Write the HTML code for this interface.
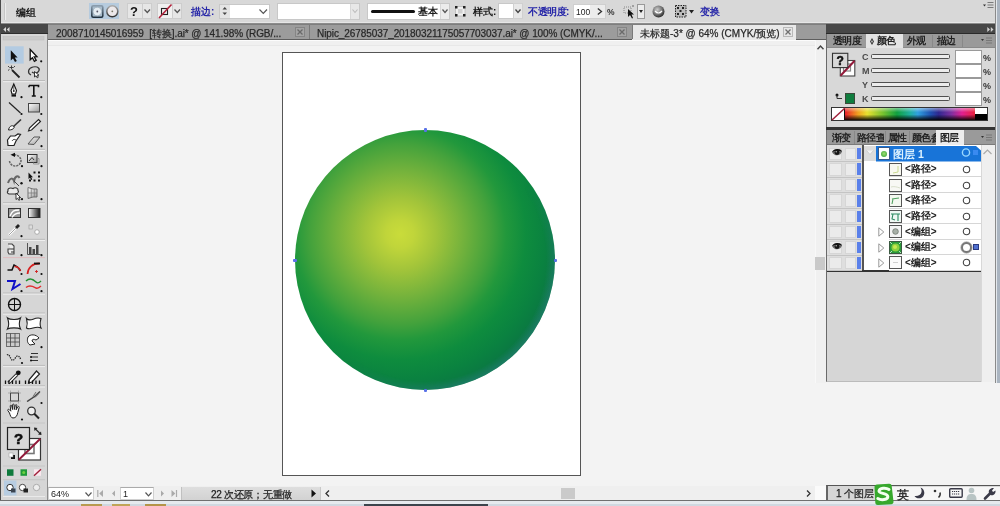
<!DOCTYPE html>
<html><head><meta charset="utf-8">
<style>
*{margin:0;padding:0;box-sizing:border-box}
html,body{width:1000px;height:506px;overflow:hidden;background:#f3f3f3;font-family:"Liberation Sans",sans-serif;position:relative}
.a{position:absolute}
.t{position:absolute;white-space:nowrap;line-height:1;will-change:transform}
.box{position:absolute;background:#fff;border:1px solid #c4c4c4}
.dd{position:absolute;background:#ececec;border:1px solid #c4c4c4}
.blue{color:#2626a8;font-weight:700}
.pt{font-size:10px;letter-spacing:-0.6px;font-weight:700;color:#222}
.cj{font-size:10px;font-weight:700;color:#1a1a1a}
svg{position:absolute;overflow:visible;will-change:transform}
</style></head><body>
<!-- ============ control bar ============ -->
<div class="a" style="left:0;top:0;width:1000px;height:24px;background:#d8d8d8"></div>
<div class="a" style="left:0;top:21.5px;width:1000px;height:1.5px;background:#e6e6e6"></div><div class="a" style="left:0;top:23px;width:1000px;height:1px;background:#8c8c8c"></div>
<div class="a" style="left:4px;top:3px;width:2px;height:17px;background:#c6c6c6;border-right:1px solid #ececec"></div>
<div class="t cj" style="left:16px;top:8px">编组</div>
<!-- isolate buttons -->
<div class="a" style="left:89px;top:3px;width:30px;height:16px;background:#b6cbde"></div>
<svg style="left:90.5px;top:5px" width="14" height="14"><defs><linearGradient id="isf" x1="0" y1="0" x2="0" y2="1"><stop offset="0" stop-color="#8a9cac"/><stop offset="1" stop-color="#1e2e3c"/></linearGradient></defs><rect x="0.8" y="0.8" width="11" height="11.5" rx="1.5" fill="#a8bccc" stroke="url(#isf)" stroke-width="1.6"/><circle cx="6.3" cy="6.5" r="4.3" fill="#e4ecf2" stroke="#9aaab8" stroke-width="0.7"/><circle cx="6.3" cy="6.5" r="0.9" fill="#556"/></svg>
<svg style="left:105.5px;top:5px" width="14" height="14"><defs><linearGradient id="isg" x1="0" y1="0" x2="0" y2="1"><stop offset="0" stop-color="#aaa"/><stop offset="1" stop-color="#333"/></linearGradient></defs><circle cx="6.3" cy="6.3" r="5.5" fill="#ece8ea" stroke="url(#isg)" stroke-width="1.5"/><circle cx="6.3" cy="6.3" r="0.9" fill="#776"/></svg>
<!-- fill ? -->
<div class="a" style="left:127px;top:3px;width:16px;height:16px;background:#e6e6e6;border:1px solid #cdcdcd"></div>
<div class="t" style="left:130px;top:5px;font-size:13px;font-weight:bold;color:#111">?</div>
<div class="a" style="left:142px;top:3px;width:10px;height:16px;background:#e6e6e6;border:1px solid #cdcdcd"></div>
<svg style="left:144px;top:9px" width="7" height="5"><path d="M0.5 0.5 L3.3 3.5 L6 0.5" fill="none" stroke="#555" stroke-width="1.3"/></svg>
<!-- stroke none -->
<div class="a" style="left:157px;top:3px;width:16px;height:16px;background:#f0f0f0;border:1px solid #cdcdcd"></div>
<svg style="left:157px;top:3px" width="16" height="16"><rect x="4.5" y="5.5" width="6" height="6" fill="none" stroke="#222" stroke-width="1.1"/><path d="M2 15 L14.5 1.5" stroke="#b0203a" stroke-width="1.6"/></svg>
<div class="a" style="left:172px;top:3px;width:10px;height:16px;background:#e6e6e6;border:1px solid #cdcdcd"></div>
<svg style="left:174px;top:9px" width="7" height="5"><path d="M0.5 0.5 L3.3 3.5 L6 0.5" fill="none" stroke="#555" stroke-width="1.3"/></svg>
<div class="t blue" style="left:191px;top:7px;font-size:10px">描边:</div>
<!-- stroke weight -->
<div class="box" style="left:219px;top:4px;width:51px;height:15px;border-color:#c8c8c8"></div>
<div class="a" style="left:220px;top:5px;width:10px;height:13px;background:#e4e4e4"></div>
<svg style="left:222px;top:6px" width="6" height="10"><path d="M0.5 3.5 L2.8 1 L5 3.5 Z M0.5 6.5 L2.8 9 L5 6.5 Z" fill="#444"/></svg>
<svg style="left:259px;top:9px" width="9" height="6"><path d="M0.5 0.5 L4.3 4.3 L8 0.5" fill="none" stroke="#555" stroke-width="1.2"/></svg>
<!-- variable width -->
<div class="box" style="left:277px;top:3px;width:83px;height:17px;border-color:#c8c8c8"></div>
<div class="a" style="left:350px;top:4px;width:9px;height:15px;background:#e8e8e8;border-left:1px solid #d8d8d8"></div>
<svg style="left:352px;top:9px" width="6" height="5"><path d="M0.5 0.5 L3 3.5 L5.5 0.5" fill="none" stroke="#bbb" stroke-width="1.1"/></svg>
<!-- brush -->
<div class="box" style="left:367px;top:3px;width:83px;height:17px;border-color:#c8c8c8"></div>
<div class="a" style="left:371px;top:10px;width:44px;height:3px;background:#111;border-radius:2px"></div>
<div class="t cj" style="left:418px;top:7px">基本</div>
<div class="a" style="left:440px;top:4px;width:9px;height:15px;background:#ececec;border-left:1px solid #d8d8d8"></div>
<svg style="left:442px;top:9px" width="6" height="5"><path d="M0.5 0.5 L3 3.5 L5.5 0.5" fill="none" stroke="#555" stroke-width="1.2"/></svg>
<svg style="left:455px;top:6px" width="11" height="11"><rect x="0.5" y="0.5" width="9.5" height="9.5" fill="#f0f0f0" stroke="#bbb" stroke-width="0.8"/><rect x="3" y="3" width="4.5" height="4.5" fill="#d0d0d0"/><path d="M0 0h2.5v2.5h-2.5z M8 0h2.5v2.5h-2.5z M0 8h2.5v2.5h-2.5z M8 8h2.5v2.5h-2.5z" fill="#222"/></svg>
<div class="t cj" style="left:473px;top:7px">样式:</div>
<div class="box" style="left:498px;top:3px;width:16px;height:16px;border-color:#c8c8c8"></div>
<div class="a" style="left:513px;top:3px;width:10px;height:16px;background:#e8e8e8;border:1px solid #d0d0d0"></div>
<svg style="left:515px;top:9px" width="6" height="5"><path d="M0.5 0.5 L3 3.5 L5.5 0.5" fill="none" stroke="#444" stroke-width="1.3"/></svg>
<div class="t blue" style="left:528px;top:7px;font-size:10px;letter-spacing:-0.5px">不透明度:</div>
<div class="box" style="left:573px;top:4px;width:33px;height:15px;border-color:#cfcfcf"></div>
<div class="a" style="left:590px;top:5px;width:15px;height:13px;background:#ececec"></div><div class="t" style="left:575.5px;top:7.5px;font-size:8.5px;color:#222">100</div>
<svg style="left:597px;top:8px" width="6" height="7"><path d="M0.8 0.5 L4.5 3.5 L0.8 6.5" fill="none" stroke="#333" stroke-width="1.3"/></svg>
<div class="t" style="left:607px;top:7.5px;font-size:8.5px;font-weight:700;color:#333">%</div>
<svg style="left:623px;top:4px" width="14" height="15"><rect x="1" y="3" width="7" height="6" fill="none" stroke="#777" stroke-width="0.8" stroke-dasharray="1 1"/><path d="M5 5 L5 13 L7 11 L9 14.5 L10 14 L8.5 10.5 L11 10.5 Z" fill="#111"/><path d="M9 1 l2 2 M11 1 l-2 2" stroke="#888" stroke-width="0.7"/></svg>
<div class="a" style="left:637px;top:4px;width:8px;height:15px;background:#ececec;border:1px solid #999"></div>
<svg style="left:639px;top:10px" width="4" height="3"><path d="M0 0 L4 0 L2 3 Z" fill="#222"/></svg>
<svg style="left:652px;top:5px" width="13" height="13"><defs><radialGradient id="gl" cx="40%" cy="35%" r="70%"><stop offset="0" stop-color="#ccc"/><stop offset="0.55" stop-color="#777"/><stop offset="1" stop-color="#222"/></radialGradient></defs><circle cx="6.5" cy="6.5" r="6" fill="url(#gl)"/><path d="M3 6 Q6.5 10 10 6" stroke="#fff" stroke-width="1.2" fill="none"/></svg>
<svg style="left:675px;top:5px" width="12" height="13"><rect x="0.5" y="0.5" width="10.5" height="11.5" fill="#bbb" stroke="#222" stroke-width="1" stroke-dasharray="1.5 1"/><path d="M2 2 h2 v2 h-2z M7 2 h2 v2 h-2z M2 8 h2 v2 h-2z M7 8 h2 v2 h-2z M4.5 5 h2 v2 h-2z" fill="#222"/></svg>
<svg style="left:689px;top:10px" width="5" height="4"><path d="M0 0 L5 0 L2.5 3.5 Z" fill="#222"/></svg>
<div class="t blue" style="left:700px;top:7px;font-size:10px">变换</div>
<svg style="left:983px;top:1px" width="12" height="9"><path d="M0 3.5 L3 3.5 L1.5 5.5 Z" fill="#333"/><path d="M4.5 1.5 h6 M4.5 4 h6 M4.5 6.5 h6" stroke="#7a7a7a" stroke-width="1.1"/></svg>

<!-- ============ tool panel ============ -->
<div class="a" style="left:0;top:0;width:1px;height:500px;background:#4a4a4a"></div>
<div class="a" style="left:1px;top:24px;width:47px;height:10px;background:#474747;border-bottom:1px solid #2c2c2c"></div>
<svg style="left:3px;top:26.5px" width="7" height="5"><path d="M3 0 L0.3 2.5 L3 5 Z M6.5 0 L3.8 2.5 L6.5 5 Z" fill="#d8d8d8"/></svg>
<div class="a" id="tp" style="left:1px;top:34px;width:47px;height:466px;background:#d6d6d6;border-right:1px solid #8c8c8c"></div>
<svg style="left:0;top:0" width="48" height="506" viewBox="0 0 48 506">
<defs>
<linearGradient id="rg" x1="0" y1="0" x2="1" y2="1"><stop offset="0" stop-color="#fff"/><stop offset="1" stop-color="#999"/></linearGradient>
<linearGradient id="gg" x1="0" y1="0" x2="1" y2="0"><stop offset="0" stop-color="#fff"/><stop offset="1" stop-color="#111"/></linearGradient>
</defs>
<!-- grip -->
<rect x="3" y="36.5" width="41" height="3.5" fill="#c9c9c9" stroke="#bdbdbd" stroke-width="0.5"/>
<!-- selection highlight -->
<rect x="5" y="46.3" width="18.7" height="17.3" fill="#b3cbe2"/>
<!-- arrow -->
<path d="M10.8 50.2 L10.8 60.5 L13 58.4 L15 62 L16.8 61 L14.8 57.6 L17.6 57.4 Z" fill="#111"/>
<!-- direct selection -->
<path d="M30.2 49.5 L30.2 59.8 L32.4 57.7 L34.4 61.3 L36.2 60.3 L34.2 56.9 L37 56.7 Z" fill="#fff" stroke="#111" stroke-width="1.3"/>
<circle cx="41.2" cy="61.3" r="1.1" fill="#111"/>
<!-- magic wand -->
<path d="M12 70 L19.5 77.5" stroke="#222" stroke-width="1.8"/>
<path d="M11.5 65.5 v4 M9.5 67.5 h4 M8 66 l1.3 1.3 M15 66 l-1.3 1.3 M8 70.5 l1.5 -1.2" stroke="#333" stroke-width="0.9"/>
<!-- lasso -->
<path d="M31 75 C27 73 28 68 33 67 C38 66 41 69 38 72 C36 74 33 73 32 72" fill="none" stroke="#333" stroke-width="1.2"/>
<path d="M34.5 71.5 L34.5 77 L36 75.8 L37.2 77.8 L38.3 77.2 L37.2 75.3 L39 75.2 Z" fill="#fff" stroke="#222" stroke-width="0.9"/>
<line x1="3" y1="80.5" x2="45" y2="80.5" stroke="#bcbcbc" stroke-width="1"/><line x1="3" y1="81.7" x2="45" y2="81.7" stroke="#eeeeee" stroke-width="1"/>
<!-- pen -->
<path d="M13.8 84 L16.5 90.5 L15.5 94 L12 94 L11 90.5 Z" fill="#fff" stroke="#111" stroke-width="1.1"/>
<path d="M13.8 86 v4.5" stroke="#333" stroke-width="0.8"/><circle cx="13.8" cy="91" r="0.9" fill="#222"/>
<path d="M11.5 95.5 h4.5" stroke="#111" stroke-width="2.2"/>
<circle cx="21.5" cy="97.2" r="1.1" fill="#111"/>
<!-- type -->
<path d="M29 85.5 h9.5 v1.8 M29 85.5 v1.8 M33.8 85.5 v10.5 M31.8 96 h4" fill="none" stroke="#111" stroke-width="1.6"/>
<circle cx="41.3" cy="97.2" r="1.1" fill="#111"/>
<!-- line -->
<path d="M9 102.5 L20.5 113" stroke="#222" stroke-width="1.2"/>
<circle cx="21.5" cy="114" r="1.1" fill="#111"/>
<!-- rect -->
<rect x="28.5" y="103.5" width="11" height="8.5" fill="url(#rg)" stroke="#444" stroke-width="1"/>
<circle cx="41.3" cy="114" r="1.1" fill="#111"/>
<!-- brush -->
<path d="M21 119.5 L13 127" stroke="#333" stroke-width="1.6"/>
<path d="M13.5 126 C11 125 9 127 8.5 130 C11 130 13.5 129.5 14.2 127.3 Z" fill="#fff" stroke="#222" stroke-width="1"/>
<!-- pencil -->
<path d="M38.5 119.5 L40.5 121.5 L31.5 130 L28.5 131 L29.5 128 Z" fill="#fff" stroke="#222" stroke-width="1.1"/>
<circle cx="41.3" cy="130.5" r="1.1" fill="#111"/>
<!-- blob/shaper -->
<path d="M7.5 140 L10.5 136 L15 136 L18 134 L20.5 134.5 L16 141 L14 145.5 L8 145.5 Z" fill="#fff" stroke="#222" stroke-width="1.2"/>
<path d="M12 141 C13 139 15 139 16 140" fill="none" stroke="#555" stroke-width="1"/>
<!-- eraser -->
<path d="M28 144 L34 137 L40 137 L34 144.5 Z" fill="url(#rg)" stroke="#555" stroke-width="1"/>
<circle cx="41.5" cy="146.2" r="1.1" fill="#111"/>
<line x1="3" y1="149.3" x2="45" y2="149.3" stroke="#bcbcbc" stroke-width="1"/><line x1="3" y1="150.5" x2="45" y2="150.5" stroke="#eeeeee" stroke-width="1"/>
<!-- rotate -->
<path d="M14 154.8 C18.5 154.8 21 158 21 160.5 C21 164 18 166 15 166 C12 166 9.5 163.5 9.5 160.5" fill="none" stroke="#666" stroke-width="1.5" stroke-dasharray="2.2 0.9"/>
<path d="M10.5 154.8 L15 152.8 L15 157 Z" fill="#111"/>
<circle cx="22" cy="166.2" r="1.1" fill="#111"/>
<!-- scale -->
<rect x="27.5" y="154.5" width="9.5" height="8" fill="url(#rg)" stroke="#333" stroke-width="1"/>
<path d="M29 161 L32 157.5 L34 160" fill="none" stroke="#333" stroke-width="1"/>
<path d="M37 158.5 h2 v5.5 h-5.5 v-1.5" fill="none" stroke="#888" stroke-width="0.8"/>
<circle cx="41.5" cy="166.2" r="1.1" fill="#111"/>
<!-- warp -->
<path d="M8 183 C10 177 13 178 14 181 C15 176 18 175 19.5 178" fill="none" stroke="#666" stroke-width="2"/>
<path d="M14 181 L19 186" stroke="#444" stroke-width="1"/>
<circle cx="21.5" cy="183.2" r="1.2" fill="#111"/>
<!-- free transform -->
<path d="M33.5 171.5h2v2h-2z M38 171.5h2v2h-2z M38 175.5h2v2h-2z M29 179.5h2v2h-2z M33.5 179.5h2v2h-2z M38 179.5h2v2h-2z" fill="#111"/>
<path d="M28.5 172.5 L28.5 179 L30 177.8 L31.3 180 L32.3 179.4 L31.2 177.3 L33 177.2 Z" fill="#111"/>
<!-- shape builder -->
<path d="M8 191 C7 188 11 187.5 13 188.5 C15 187 18.5 188 18 190.5 C19.5 192 17 194.5 15 194 L9 194 C7 193.5 7 192 8 191 Z" fill="#e9e9e9" stroke="#333" stroke-width="1.1"/>
<path d="M16 193 L16 199.5 L17.6 198.2 L18.8 200.3 L20 199.7 L18.8 197.6 L20.6 197.5 Z" fill="#fff" stroke="#222" stroke-width="0.9"/>
<circle cx="22" cy="199.2" r="1.1" fill="#111"/>
<!-- perspective grid -->
<path d="M28 187.5 L33 189 L37 189 L37 197 L33 197 L28 198.5 Z" fill="url(#rg)" stroke="#666" stroke-width="0.9"/>
<path d="M28 193 h9 M31.3 188 v10 M34.3 189 v8" stroke="#777" stroke-width="0.7"/>
<circle cx="41.5" cy="199.2" r="1.1" fill="#111"/>
<line x1="3" y1="202.7" x2="45" y2="202.7" stroke="#bcbcbc" stroke-width="1"/><line x1="3" y1="203.89999999999998" x2="45" y2="203.89999999999998" stroke="#eeeeee" stroke-width="1"/>
<!-- mesh -->
<rect x="8.5" y="208.5" width="12" height="9" fill="#999" stroke="#333" stroke-width="1"/>
<path d="M10 216 C12 211 14 210 19 210 M12 217.5 C14 214 16 213 20 213" stroke="#fff" stroke-width="1.4" fill="none"/>
<!-- gradient -->
<rect x="28.5" y="208.5" width="11.5" height="9" fill="url(#gg)" stroke="#333" stroke-width="1"/>
<!-- eyedropper -->
<path d="M9 235 L16.5 227.5" stroke="#fff" stroke-width="2.4"/>
<path d="M9 235 L16.5 227.5" stroke="#666" stroke-width="0.6"/>
<path d="M16 228 L19 225" stroke="#222" stroke-width="2.8"/>
<circle cx="21.5" cy="236.2" r="1.1" fill="#111"/>
<!-- blend -->
<rect x="29" y="225" width="3.5" height="4" fill="#ddd" stroke="#999" stroke-width="0.6"/>
<circle cx="37" cy="232" r="2.3" fill="#fff" stroke="#aaa" stroke-width="1"/>
<line x1="3" y1="239.3" x2="45" y2="239.3" stroke="#bcbcbc" stroke-width="1"/><line x1="3" y1="240.5" x2="45" y2="240.5" stroke="#eeeeee" stroke-width="1"/>
<!-- symbol sprayer -->
<path d="M8 244 h4 l2 2 v8 h-5 l-1 -2 v-3 h3" fill="#eee" stroke="#444" stroke-width="1.1"/>
<path d="M11 249 h3 M11 252 h3" stroke="#333" stroke-width="1"/>
<circle cx="21.5" cy="255.2" r="1.1" fill="#111"/>
<!-- column graph -->
<path d="M27.5 243 v11.5 h13" fill="none" stroke="#555" stroke-width="1"/>
<rect x="29" y="247" width="2.5" height="7" fill="#444"/><rect x="32.5" y="249" width="2.5" height="5" fill="#444"/><rect x="36" y="245" width="2.5" height="9" fill="#444"/>
<circle cx="41.5" cy="255.2" r="1.1" fill="#111"/>
<line x1="3" y1="257.6" x2="45" y2="257.6" stroke="#e0b4b8" stroke-width="0.8"/>
<!-- red curves -->
<path d="M7.5 270 h4.5 l2 -5 C16 266 19 267 20.5 271" fill="none" stroke="#111" stroke-width="1.5"/>
<path d="M14.5 266.5 C17 266.5 19.5 268.5 20.5 271" fill="none" stroke="#d02020" stroke-width="1.5"/>
<circle cx="21.5" cy="274" r="1.1" fill="#111"/>
<path d="M27.5 274 C28 267 33 263.5 39.5 263.5" fill="none" stroke="#d82020" stroke-width="1.8"/>
<path d="M34 263.5 h6" stroke="#111" stroke-width="1.8"/>
<path d="M36.5 270 v3 M35 271.5 h3" stroke="#d02020" stroke-width="0.9"/>
<circle cx="41.5" cy="274" r="1.1" fill="#111"/>
<!-- blue Z -->
<path d="M7 281 h8 L12.5 289 L20.5 284" fill="none" stroke="#1010c8" stroke-width="2"/>
<circle cx="21.5" cy="291.2" r="1.1" fill="#111"/>
<!-- green/red waves -->
<path d="M26 281 C30 277 34 280 36 282 C38 284 40 282 41 281" fill="none" stroke="#209030" stroke-width="1.4"/>
<path d="M26 287.5 C30 284 34 287 36 288 C38 289 40 287 41 286" fill="none" stroke="#e03030" stroke-width="1.4"/>
<circle cx="41.5" cy="291.2" r="1.1" fill="#111"/>
<line x1="3" y1="293" x2="45" y2="293" stroke="#bcbcbc" stroke-width="1"/><line x1="3" y1="294.2" x2="45" y2="294.2" stroke="#eeeeee" stroke-width="1"/>
<!-- crosshair circle -->
<circle cx="14.5" cy="304.5" r="6" fill="none" stroke="#111" stroke-width="1.4"/>
<path d="M14.5 298.5 v12 M8.5 304.5 h12" stroke="#111" stroke-width="1"/>
<line x1="3" y1="313" x2="45" y2="313" stroke="#bcbcbc" stroke-width="1"/><line x1="3" y1="314.2" x2="45" y2="314.2" stroke="#eeeeee" stroke-width="1"/>
<!-- envelope -->
<path d="M7.5 318 C10 320 18 320 20.5 318 C19 322 19 326 20.5 329 C18 327.5 10 327.5 7.5 329 C9 326 9 322 7.5 318 Z" fill="#fff" stroke="#222" stroke-width="1.1"/>
<path d="M26.5 318.5 C31 323 34 316 41 318.5 C40 322 40 326 41 328 C35 325 31 331 26.5 328 C27.5 325 27.5 322 26.5 318.5 Z" fill="#fff" stroke="#222" stroke-width="1.1"/>
<!-- mesh grid -->
<rect x="6.5" y="333.5" width="13" height="13" fill="#ccc" stroke="#555" stroke-width="0.8"/>
<path d="M6.5 338 h13 M6.5 342 h13 M10.5 333.5 v13 M15 333.5 v13" stroke="#444" stroke-width="0.8"/>
<!-- smudge -->
<path d="M28 337 C30 334 36 334 39 338 L36 340 C34 339 32 339 32 341 L35 344 L30 345 C27 343 27 340 28 337 Z" fill="#fff" stroke="#222" stroke-width="1"/>
<circle cx="41.5" cy="347.2" r="1.1" fill="#111"/>
<!-- dotted wave -->
<path d="M7 355 C9 353 10 358 12 360 C14 362 16 355 18 356 C19.5 357 20 357 20.5 359" fill="none" stroke="#222" stroke-width="1.3" stroke-dasharray="1.3 1"/>
<circle cx="22" cy="363" r="1.1" fill="#111"/>
<!-- lines icon -->
<path d="M31 353.5 h7 M31 357 h7 M31 360.5 h7" stroke="#333" stroke-width="1.2"/>
<circle cx="31" cy="357" r="1" fill="#111"/><circle cx="31" cy="360.5" r="1" fill="#111"/>
<line x1="3" y1="365.4" x2="45" y2="365.4" stroke="#bcbcbc" stroke-width="1"/><line x1="3" y1="366.59999999999997" x2="45" y2="366.59999999999997" stroke="#eeeeee" stroke-width="1"/>
<!-- eyedropper w ruler -->
<path d="M8.5 383 L17 374.5" stroke="#222" stroke-width="3.2"/>
<path d="M8.8 382.7 L16.7 374.8" stroke="#fff" stroke-width="1.5"/>
<circle cx="18.3" cy="372.8" r="2.4" fill="#111"/>
<path d="M5.5 380.5 v3.5 M9 380.5 v3.5 M12.5 380.5 v3.5 M16 380.5 v3.5 M19.5 380.5 v3.5" stroke="#111" stroke-width="1.3"/>
<!-- pencil w ruler -->
<path d="M36.5 371 L39.5 374 L32 382 L28.5 383 L29.3 379.5 Z" fill="#fff" stroke="#222" stroke-width="1.2"/>
<path d="M25.5 380.5 v3.5 M29 380.5 v3.5 M32.5 380.5 v3.5 M36 380.5 v3.5 M39.5 380.5 v3.5" stroke="#111" stroke-width="1.3"/>
<line x1="3" y1="385.8" x2="45" y2="385.8" stroke="#bcbcbc" stroke-width="1"/><line x1="3" y1="387.0" x2="45" y2="387.0" stroke="#eeeeee" stroke-width="1"/>
<!-- artboard -->
<rect x="10.5" y="393" width="8" height="8" fill="none" stroke="#444" stroke-width="1"/>
<path d="M10.5 390.5 v2 M18.5 390.5 v2 M10.5 401.5 v2 M18.5 401.5 v2 M8 393 h2 M8 401 h2 M19 393 h2 M19 401 h2" stroke="#999" stroke-width="0.7"/>
<!-- slice -->
<path d="M27 401.5 C31 399 35 397 40 391.5" fill="none" stroke="#444" stroke-width="1.3"/>
<path d="M33 396.5 L36 392 M35 397.5 L39 393.5" stroke="#666" stroke-width="0.9"/>
<circle cx="41.5" cy="403" r="1.1" fill="#111"/>
<!-- hand -->
<path d="M9.5 413 L7.8 410.5 C7.3 409.6 8.6 408.8 9.3 409.6 L10.8 411.2 L10.2 406 C10.1 405 11.5 404.8 11.7 405.8 L12.5 409.5 L12.6 404.8 C12.6 403.8 14 403.8 14.1 404.8 L14.3 409.5 L15.4 405.2 C15.6 404.3 17 404.5 16.8 405.5 L16.1 409.8 L17.8 406.8 C18.3 406 19.5 406.6 19.2 407.5 L17.8 412.5 C17.2 415.8 15.8 418 13 418 C11 418 10.3 415.5 9.5 413 Z" fill="#fff" stroke="#222" stroke-width="1"/>
<circle cx="22" cy="419.5" r="1.1" fill="#111"/>
<!-- zoom -->
<circle cx="31.5" cy="411" r="3.8" fill="#eee" stroke="#333" stroke-width="1.3"/>
<path d="M34.3 413.8 L39 418.5" stroke="#222" stroke-width="2"/>
<line x1="3" y1="423" x2="45" y2="423" stroke="#c6c6c6" stroke-width="1"/>
<!-- stroke box -->
<rect x="18.5" y="438.5" width="22" height="21.5" fill="#fff" stroke="#333" stroke-width="1.2"/>
<rect x="25" y="444.5" width="9" height="9" fill="none" stroke="#777" stroke-width="1.6"/>
<path d="M18.8 459.8 L40.3 438.8" stroke="#921a3a" stroke-width="1.9"/>
<!-- fill box -->
<rect x="7.5" y="427.5" width="22" height="22" fill="#d8d8d8" stroke="#222" stroke-width="1.2"/>
<text x="18.5" y="444" text-anchor="middle" font-family="Liberation Sans" font-weight="bold" font-size="15" fill="#111" stroke="#111" stroke-width="0.6">?</text>
<!-- swap arrow -->
<path d="M35.5 429 L40 433.5" stroke="#333" stroke-width="1.3"/>
<path d="M34 427.5 L37.5 428 L34.5 431 Z M41.5 435 L38 434.5 L41 431.5 Z" fill="#222"/>
<!-- default mini -->
<rect x="11" y="455" width="4" height="4" fill="#111"/>
<rect x="9" y="453" width="4" height="4" fill="#fff" stroke="#999" stroke-width="0.5"/>
<line x1="3" y1="466" x2="45" y2="466" stroke="#c6c6c6" stroke-width="1"/>
<!-- color/gradient/none -->
<rect x="7" y="469.3" width="6.5" height="6.5" fill="#0e7a3c"/>
<rect x="20.5" y="469.3" width="6.5" height="6.5" fill="#1f9a3a"/><circle cx="23.75" cy="472.5" r="1.5" fill="#6cd040"/>
<rect x="34" y="469.3" width="7" height="6.5" fill="#fbe8ef"/><path d="M34 475.8 L41 469.3" stroke="#a0203a" stroke-width="1.5"/>
<line x1="3" y1="479.7" x2="45" y2="479.7" stroke="#c6c6c6" stroke-width="1"/>
<!-- draw modes -->
<rect x="4" y="480.5" width="12.5" height="15" fill="#b7cde2"/>
<circle cx="10" cy="487.5" r="3.2" fill="#fff" stroke="#333" stroke-width="1"/>
<rect x="11" y="488.5" width="4.5" height="4" fill="#3a4450"/>
<circle cx="22.5" cy="487.5" r="3.2" fill="#fff" stroke="#444" stroke-width="1"/>
<rect x="23.5" y="488.5" width="4.5" height="4" fill="#222"/>
<circle cx="36.5" cy="487.5" r="3.2" fill="#eee" stroke="#aaa" stroke-width="1"/>
<line x1="3" y1="496.5" x2="45" y2="496.5" stroke="#eaeaea" stroke-width="1"/>
</svg>


<!-- ============ tab bar ============ -->
<div class="a" style="left:48px;top:24px;width:778px;height:16px;background:#9c9c9c;border-top:1px solid #7e7e7e;border-bottom:1.5px solid #5e5e5e"></div>
<div class="a" style="left:309px;top:25px;width:1px;height:14px;background:#7a7a7a"></div>
<div class="a" style="left:632px;top:24px;width:164px;height:16px;background:#e8e8e8;border-top:1px solid #7e7e7e"></div>
<div class="t" style="left:56px;top:28.5px;font-size:10px;letter-spacing:-0.075px;color:#222;-webkit-text-stroke:0.25px #333">2008710145016959&nbsp; [转换].ai* @ 141.98% (RGB/...</div>
<div class="t" style="left:317px;top:28.5px;font-size:10px;letter-spacing:-0.08px;color:#222;-webkit-text-stroke:0.25px #333">Nipic_26785037_20180321175057703037.ai* @ 100% (CMYK/...</div>
<div class="t" style="left:640px;top:28.5px;font-size:10px;color:#222;-webkit-text-stroke:0.25px #333">未标题-3* @ 64% (CMYK/预览)</div>

<svg style="left:295px;top:27px" width="10" height="10"><rect x="0.5" y="0.5" width="9" height="9" fill="#a4a4a4" stroke="#858585" stroke-width="1"/><path d="M2.5 2.5 L7.5 7.5 M7.5 2.5 L2.5 7.5" stroke="#6a6a6a" stroke-width="1.3"/></svg>
<svg style="left:617px;top:27px" width="10" height="10"><rect x="0.5" y="0.5" width="9" height="9" fill="#a4a4a4" stroke="#858585" stroke-width="1"/><path d="M2.5 2.5 L7.5 7.5 M7.5 2.5 L2.5 7.5" stroke="#6a6a6a" stroke-width="1.3"/></svg>
<svg style="left:782.5px;top:27px" width="10" height="10"><rect x="0.5" y="0.5" width="9" height="9" fill="#e6e6e6" stroke="#b8b8b8" stroke-width="1"/><path d="M2.5 2.5 L7.5 7.5 M7.5 2.5 L2.5 7.5" stroke="#707070" stroke-width="1.3"/></svg>
<div class="a" style="left:631.5px;top:25px;width:1px;height:14px;background:#7a7a7a"></div>
<!-- ============ canvas ============ -->
<div class="a" style="left:48px;top:40px;width:767px;height:1px;background:#fcfcfc"></div>
<div class="a" style="left:48px;top:41px;width:767px;height:4px;background:#f0f0f0"></div>
<div class="a" style="left:48px;top:45px;width:767px;height:1px;background:#e8e8e8"></div>

<div class="a" style="left:281.8px;top:51.8px;width:299.6px;height:424.4px;background:#fff;border:1.6px solid #555"></div>
<div class="a" id="ball" style="left:295px;top:130px;width:260px;height:260px;border-radius:50%;background:radial-gradient(circle at 40.4% 40%,#c9dc3a 0px,#c0d53a 14px,#a2c43a 36px,#76b33c 62px,#44a23c 90px,#22983c 106px,#0e8c3e 126px,#0a8240 145px,#0a7842 160px,#0a7444 172px,#0a7444 220px)"></div>
<div class="a" style="left:295px;top:130px;width:260px;height:260px;border-radius:50%;background:radial-gradient(circle at 50% 50%,rgba(40,120,120,0) 0,rgba(40,120,120,0) 121px,rgba(50,130,140,.45) 130px);-webkit-mask-image:linear-gradient(135deg,transparent 55%,#000 80%)"></div>

<div class="a" style="left:423.5px;top:128px;width:3.5px;height:3.5px;background:#5a72e8;border-radius:1px"></div>
<div class="a" style="left:293px;top:258.5px;width:3.5px;height:3.5px;background:#5a72e8;border-radius:1px"></div>
<div class="a" style="left:553.5px;top:258.5px;width:3.5px;height:3.5px;background:#5a72e8;border-radius:1px"></div>
<div class="a" style="left:423.5px;top:388.5px;width:3.5px;height:3.5px;background:#5a72e8;border-radius:1px"></div>
<!-- ============ right panel ============ -->
<div class="a" style="left:826px;top:24px;width:170px;height:10px;background:#474747;border-bottom:1px solid #2a2a2a"></div>
<svg style="left:986.5px;top:26.5px" width="7" height="5"><path d="M0.3 0 L3 2.5 L0.3 5 Z M3.8 0 L6.5 2.5 L3.8 5 Z" fill="#d0d0d0"/></svg>
<div class="a" style="left:826px;top:34px;width:170px;height:94px;background:#d8d8d8;border-left:1.5px solid #6a6a6a;border-right:1px solid #9a9a9a"></div>
<div class="a" style="left:827px;top:34px;width:168px;height:14px;background:#9a9a9a;border-bottom:1px solid #8a8a8a"></div>
<div class="a" style="left:866px;top:34px;width:37px;height:14px;background:#e4e4e4"></div>
<div class="a" style="left:932px;top:35px;width:1px;height:12px;background:#888"></div>
<div class="a" style="left:962px;top:35px;width:1px;height:12px;background:#888"></div>
<div class="t pt" style="left:832.5px;top:36px">透明度</div>
<svg style="left:869.5px;top:38px" width="4" height="7"><path d="M2 0 L4 3.5 L2 7 L0 3.5 Z" fill="#333"/><path d="M2 2 L2.8 3.5 L2 5 L1.2 3.5 Z" fill="#ddd"/></svg>
<div class="t pt" style="left:876.5px;top:36px">颜色</div>
<div class="t pt" style="left:907px;top:36px">外观</div>
<div class="t pt" style="left:937px;top:36px">描边</div>
<svg style="left:981px;top:37px" width="12" height="8"><path d="M0 2 L3 2 L1.5 4 Z" fill="#333"/><path d="M5 1 h6 M5 3.5 h6 M5 6 h6" stroke="#777" stroke-width="1.2"/></svg>
<!-- fill/stroke -->
<svg style="left:830px;top:51px" width="28" height="28">
<rect x="10.3" y="9.5" width="14.5" height="15.5" fill="#fff" stroke="#444" stroke-width="1.1"/>
<rect x="13.5" y="13" width="7" height="7" fill="none" stroke="#888" stroke-width="1.2"/>
<path d="M10.5 24.8 L24.6 9.7" stroke="#921a3a" stroke-width="2"/>
<rect x="2.5" y="2.3" width="15.3" height="14.3" fill="#d8d8d8" stroke="#333" stroke-width="1.1"/>
<text x="10.2" y="14.3" text-anchor="middle" font-family="Liberation Sans" font-weight="bold" font-size="12" fill="#111" stroke="#111" stroke-width="0.6">?</text>
</svg>
<div class="t" style="left:862px;top:53px;font-size:9px;font-weight:700;color:#4a4a4a">C</div>
<div class="t" style="left:862px;top:67px;font-size:9px;font-weight:700;color:#4a4a4a">M</div>
<div class="t" style="left:862px;top:81px;font-size:9px;font-weight:700;color:#4a4a4a">Y</div>
<div class="t" style="left:862px;top:95px;font-size:9px;font-weight:700;color:#4a4a4a">K</div>
<div class="a" style="left:871px;top:54px;width:79px;height:5px;background:#ececec;border:1px solid #505050;border-radius:1.5px"></div>
<div class="a" style="left:871px;top:68px;width:79px;height:5px;background:#ececec;border:1px solid #505050;border-radius:1.5px"></div>
<div class="a" style="left:871px;top:82px;width:79px;height:5px;background:#ececec;border:1px solid #505050;border-radius:1.5px"></div>
<div class="a" style="left:871px;top:96px;width:79px;height:5px;background:#ececec;border:1px solid #505050;border-radius:1.5px"></div>
<div class="a" style="left:955px;top:50px;width:27px;height:14px;background:#fff;border:1px solid #9a9a9a"></div>
<div class="a" style="left:955px;top:64px;width:27px;height:14px;background:#fff;border:1px solid #9a9a9a"></div>
<div class="a" style="left:955px;top:78px;width:27px;height:14px;background:#fff;border:1px solid #9a9a9a"></div>
<div class="a" style="left:955px;top:92px;width:27px;height:14px;background:#fff;border:1px solid #9a9a9a"></div>
<div class="t" style="left:983px;top:54px;font-size:9px;font-weight:700;color:#333">%</div>
<div class="t" style="left:983px;top:68px;font-size:9px;font-weight:700;color:#333">%</div>
<div class="t" style="left:983px;top:82px;font-size:9px;font-weight:700;color:#333">%</div>
<div class="t" style="left:983px;top:96px;font-size:9px;font-weight:700;color:#333">%</div>
<svg style="left:835px;top:93px" width="9" height="8"><circle cx="2" cy="2" r="1.5" fill="#111"/><path d="M2 2 v3.5 h5" fill="none" stroke="#333" stroke-width="1"/></svg>
<div class="a" style="left:845px;top:93px;width:10px;height:11px;background:#0f7d3e;border:1px solid #3a4a3a"></div>
<!-- ramp -->
<div class="a" style="left:831px;top:107px;width:157px;height:14px;background:#111;border:1px solid #333"></div>
<div class="a" style="left:832px;top:108px;width:12px;height:12px;background:#fff"></div>
<svg style="left:832px;top:108px" width="13" height="12"><path d="M0 12 L13 0" stroke="#a0203a" stroke-width="1.5"/></svg>
<div class="a" style="left:845px;top:108px;width:130px;height:12px;background:linear-gradient(90deg,#e8202a 0%,#f0a020 10%,#e8e030 17%,#70c030 30%,#10a040 40%,#20b0a0 50%,#30a0e0 56%,#2050b0 66%,#302890 72%,#8030a0 82%,#e02090 90%,#e8203a 100%)"></div>
<div class="a" style="left:845px;top:108px;width:130px;height:12px;background:linear-gradient(180deg,rgba(255,255,255,.45) 0%,rgba(255,255,255,0) 35%,rgba(0,0,0,0) 55%,rgba(0,0,0,.9) 100%)"></div>
<div class="a" style="left:975px;top:108px;width:12px;height:6px;background:#fff"></div>
<div class="a" style="left:975px;top:114px;width:12px;height:6px;background:#000"></div>
<!-- divider -->
<div class="a" style="left:826px;top:127px;width:170px;height:3px;background:#333"></div>
<!-- layers panel -->
<div class="a" style="left:826px;top:130px;width:170px;height:252px;background:#d6d6d6;border-left:1.5px solid #6a6a6a;border-right:1px solid #9a9a9a;border-bottom:1px solid #bbb"></div>
<div class="a" style="left:827px;top:130px;width:168px;height:15px;background:#9a9a9a;border-bottom:1px solid #7a7a7a"></div>
<div class="a" style="left:936px;top:130px;width:28px;height:15px;background:#ececec"></div>
<div class="a" style="left:854px;top:131px;width:1px;height:13px;background:#888"></div>
<div class="a" style="left:885px;top:131px;width:1px;height:13px;background:#888"></div>
<div class="a" style="left:909px;top:131px;width:1px;height:13px;background:#888"></div>
<div class="t pt" style="left:832px;top:132.5px">渐变</div>
<div class="t pt" style="left:857px;top:132.5px;width:27px;overflow:hidden">路径查</div>
<div class="t pt" style="left:888px;top:132.5px">属性</div>
<div class="t pt" style="left:912px;top:132.5px;width:24px;overflow:hidden">颜色参</div>
<div class="t pt" style="left:940px;top:132.5px">图层</div>
<svg style="left:981px;top:134px" width="12" height="8"><path d="M0 2 L3 2 L1.5 4 Z" fill="#333"/><path d="M5 1 h6 M5 3.5 h6 M5 6 h6" stroke="#777" stroke-width="1.2"/></svg>
<div class="a" style="left:827px;top:145px;width:36px;height:126px;background:#dedede"></div>
<div class="a" style="left:863px;top:145px;width:118px;height:126px;background:#fff"></div>
<div class="a" style="left:981px;top:145px;width:14px;height:237px;background:#efefef;border-left:1px solid #d8d8d8"></div>
<svg style="left:983px;top:149px" width="9" height="6"><path d="M0.5 5 L4.5 1 L8.5 5" fill="none" stroke="#aaa" stroke-width="1.2"/></svg>
<div class="a" style="left:862px;top:145px;width:1.5px;height:126px;background:#555"></div>
<div class="a" style="left:827px;top:270px;width:154px;height:1.5px;background:#333"></div>
<div class="a" style="left:829px;top:147.5px;width:13px;height:12px;background:#ebebeb;border:1px solid #d6d6d6"></div>
<div class="a" style="left:845px;top:147.5px;width:11px;height:12px;background:#ebebeb;border:1px solid #d6d6d6"></div>
<div class="a" style="left:857px;top:148px;width:3.5px;height:11px;background:#5a80ea"></div>
<div class="a" style="left:827px;top:160.5px;width:35px;height:1px;background:#c4c4c4"></div>
<div class="a" style="left:829px;top:162.5px;width:13px;height:13px;background:#ebebeb;border:1px solid #d6d6d6"></div>
<div class="a" style="left:845px;top:162.5px;width:11px;height:13px;background:#ebebeb;border:1px solid #d6d6d6"></div>
<div class="a" style="left:857px;top:163px;width:3.5px;height:12px;background:#5a80ea"></div>
<div class="a" style="left:827px;top:176.5px;width:35px;height:1px;background:#c4c4c4"></div>
<div class="a" style="left:889px;top:176px;width:92px;height:1px;background:#d6d6d6"></div>
<div class="a" style="left:829px;top:178.5px;width:13px;height:12.5px;background:#ebebeb;border:1px solid #d6d6d6"></div>
<div class="a" style="left:845px;top:178.5px;width:11px;height:12.5px;background:#ebebeb;border:1px solid #d6d6d6"></div>
<div class="a" style="left:857px;top:179px;width:3.5px;height:11.5px;background:#5a80ea"></div>
<div class="a" style="left:827px;top:192.0px;width:35px;height:1px;background:#c4c4c4"></div>
<div class="a" style="left:889px;top:191.5px;width:92px;height:1px;background:#d6d6d6"></div>
<div class="a" style="left:829px;top:194.0px;width:13px;height:13.0px;background:#ebebeb;border:1px solid #d6d6d6"></div>
<div class="a" style="left:845px;top:194.0px;width:11px;height:13.0px;background:#ebebeb;border:1px solid #d6d6d6"></div>
<div class="a" style="left:857px;top:194.5px;width:3.5px;height:12.0px;background:#5a80ea"></div>
<div class="a" style="left:827px;top:208.0px;width:35px;height:1px;background:#c4c4c4"></div>
<div class="a" style="left:889px;top:207.5px;width:92px;height:1px;background:#d6d6d6"></div>
<div class="a" style="left:829px;top:210.0px;width:13px;height:12.5px;background:#ebebeb;border:1px solid #d6d6d6"></div>
<div class="a" style="left:845px;top:210.0px;width:11px;height:12.5px;background:#ebebeb;border:1px solid #d6d6d6"></div>
<div class="a" style="left:857px;top:210.5px;width:3.5px;height:11.5px;background:#5a80ea"></div>
<div class="a" style="left:827px;top:223.5px;width:35px;height:1px;background:#c4c4c4"></div>
<div class="a" style="left:889px;top:223.0px;width:92px;height:1px;background:#d6d6d6"></div>
<div class="a" style="left:829px;top:225.5px;width:13px;height:12.5px;background:#ebebeb;border:1px solid #d6d6d6"></div>
<div class="a" style="left:845px;top:225.5px;width:11px;height:12.5px;background:#ebebeb;border:1px solid #d6d6d6"></div>
<div class="a" style="left:857px;top:226px;width:3.5px;height:11.5px;background:#5a80ea"></div>
<div class="a" style="left:827px;top:239.0px;width:35px;height:1px;background:#c4c4c4"></div>
<div class="a" style="left:889px;top:238.5px;width:92px;height:1px;background:#d6d6d6"></div>
<div class="a" style="left:829px;top:241.0px;width:13px;height:12.5px;background:#ebebeb;border:1px solid #d6d6d6"></div>
<div class="a" style="left:845px;top:241.0px;width:11px;height:12.5px;background:#ebebeb;border:1px solid #d6d6d6"></div>
<div class="a" style="left:857px;top:241.5px;width:3.5px;height:11.5px;background:#5a80ea"></div>
<div class="a" style="left:827px;top:254.5px;width:35px;height:1px;background:#c4c4c4"></div>
<div class="a" style="left:889px;top:254.0px;width:92px;height:1px;background:#d6d6d6"></div>
<div class="a" style="left:829px;top:256.5px;width:13px;height:12.5px;background:#ebebeb;border:1px solid #d6d6d6"></div>
<div class="a" style="left:845px;top:256.5px;width:11px;height:12.5px;background:#ebebeb;border:1px solid #d6d6d6"></div>
<div class="a" style="left:857px;top:257px;width:3.5px;height:11.5px;background:#5a80ea"></div>
<div class="a" style="left:827px;top:270.0px;width:35px;height:1px;background:#c4c4c4"></div>
<div class="a" style="left:889px;top:269.5px;width:92px;height:1px;background:#d6d6d6"></div>
<!-- eye icons -->
<svg style="left:830.5px;top:148px" width="12" height="10"><path d="M1 4 C3 0.5 9 0 11 3.5 C10 8 3.5 9 1 4 Z" fill="#6a6a6a"/><path d="M1 4 C3 0.5 9 0 11 3.5 C8.5 2.5 4 2.5 1 4 Z" fill="#111"/><circle cx="6" cy="4.5" r="2.4" fill="#151515"/><circle cx="5.2" cy="3.8" r="0.7" fill="#ccc"/></svg>
<svg style="left:830.5px;top:242px" width="12" height="10"><path d="M1 4 C3 0.5 9 0 11 3.5 C10 8 3.5 9 1 4 Z" fill="#6a6a6a"/><path d="M1 4 C3 0.5 9 0 11 3.5 C8.5 2.5 4 2.5 1 4 Z" fill="#111"/><circle cx="6" cy="4.5" r="2.4" fill="#151515"/><circle cx="5.2" cy="3.8" r="0.7" fill="#ccc"/></svg>
<!-- row 1 selected -->
<div class="a" style="left:864px;top:146px;width:12px;height:15px;background:#dcdcdc"></div>
<svg style="left:866px;top:150px" width="8" height="6"><path d="M0.5 0.5 L4 4.5 L7.5 0.5" fill="#f4f4f4" stroke="#c8c8c8" stroke-width="0.8"/></svg>
<svg style="left:876px;top:145.5px" width="106" height="16"><path d="M0 0 H100 L105 4.5 V15.5 H0 Z" fill="#1874d8"/></svg>
<div class="a" style="left:878px;top:147px;width:12px;height:13px;background:#fff;border:1px solid #3a5a8a"></div>
<div class="a" style="left:881px;top:150.5px;width:6px;height:6px;border-radius:50%;background:radial-gradient(circle at 50% 45%,#9ee070,#2a9a30)"></div>
<div class="t" style="left:893px;top:148.5px;font-size:10.5px;font-weight:bold;color:#dcf2ff">图层 1</div>
<svg style="left:960px;top:147px" width="12" height="12"><circle cx="6" cy="5.5" r="3.6" fill="none" stroke="#9ad8ff" stroke-width="1.4"/></svg>
<div class="a" style="left:973px;top:150px;width:5px;height:5px;background:#3a8af0"></div>
<!-- path rows -->
<div class="a" style="left:889px;top:163px;width:13px;height:13px;background:#f8f8f0;border:1px solid #555"></div>
<svg style="left:890px;top:164px" width="11" height="11"><path d="M8 2 L8 8 L3 9" fill="none" stroke="#c8d890" stroke-width="1"/></svg>
<div class="a" style="left:889px;top:178.5px;width:13px;height:13px;background:#f8f8f4;border:1px solid #555"></div>
<svg style="left:890px;top:179.5px" width="11" height="11"><path d="M1 7 C4 6 7 7 10 8" fill="none" stroke="#d0d8c0" stroke-width="0.8"/></svg>
<div class="a" style="left:889px;top:194px;width:13px;height:13px;background:#f4f8f0;border:1px solid #555"></div>
<svg style="left:890px;top:195px" width="11" height="11"><path d="M2 4 L9 3 M3 4 L2 9" fill="none" stroke="#50a060" stroke-width="1.1"/></svg>
<div class="a" style="left:889px;top:210px;width:13px;height:13px;background:#f0f8f4;border:1px solid #555"></div>
<svg style="left:890px;top:211px" width="11" height="11"><path d="M1 3 L10 3 M3 3 L2 8 L5 9 M8 3 L8 10" fill="none" stroke="#2a8a60" stroke-width="1.1"/></svg>
<div class="a" style="left:889px;top:225px;width:13px;height:13px;background:#f4f4f4;border:1px solid #555"></div>
<svg style="left:890px;top:226px" width="11" height="11"><circle cx="5.5" cy="5.5" r="2.8" fill="#a8b0a8" stroke="#707870" stroke-width="0.8"/></svg>
<div class="a" style="left:889px;top:240.5px;width:13px;height:13px;background:#2a9a3a;border:1px solid #3a5a40"></div>
<svg style="left:890px;top:241.5px" width="11" height="11"><circle cx="5.5" cy="5.5" r="4" fill="#8ad040"/><circle cx="5" cy="5" r="2" fill="#c8e850"/><path d="M0 0 L2 2 M11 0 L9 2 M0 11 L2 9 M11 11 L9 9" stroke="#fff" stroke-width="0.7"/></svg>
<div class="a" style="left:889px;top:256px;width:13px;height:13px;background:#fafafa;border:1px solid #555"></div>
<svg style="left:890px;top:257px" width="11" height="11"><path d="M3 5.5 h5" stroke="#bbb" stroke-width="0.7"/></svg>
<div class="t" style="left:905px;top:164px;font-size:10px;font-weight:700;color:#222">&lt;路径&gt;</div>
<div class="t" style="left:905px;top:179.5px;font-size:10px;font-weight:700;color:#222">&lt;路径&gt;</div>
<div class="t" style="left:905px;top:195px;font-size:10px;font-weight:700;color:#222">&lt;路径&gt;</div>
<div class="t" style="left:905px;top:211px;font-size:10px;font-weight:700;color:#222">&lt;路径&gt;</div>
<div class="t" style="left:905px;top:226.5px;font-size:10px;font-weight:700;color:#222">&lt;编组&gt;</div>
<div class="t" style="left:905px;top:242px;font-size:10px;font-weight:700;color:#222">&lt;编组&gt;</div>
<div class="t" style="left:905px;top:257.5px;font-size:10px;font-weight:700;color:#222">&lt;编组&gt;</div>
<svg style="left:962px;top:165px" width="9" height="9"><circle cx="4.5" cy="4.5" r="3.2" fill="#fff" stroke="#444" stroke-width="1.1"/></svg>
<svg style="left:962px;top:180.5px" width="9" height="9"><circle cx="4.5" cy="4.5" r="3.2" fill="#fff" stroke="#444" stroke-width="1.1"/></svg>
<svg style="left:962px;top:196px" width="9" height="9"><circle cx="4.5" cy="4.5" r="3.2" fill="#fff" stroke="#444" stroke-width="1.1"/></svg>
<svg style="left:962px;top:211.5px" width="9" height="9"><circle cx="4.5" cy="4.5" r="3.2" fill="#fff" stroke="#444" stroke-width="1.1"/></svg>
<svg style="left:962px;top:227px" width="9" height="9"><circle cx="4.5" cy="4.5" r="3.2" fill="#fff" stroke="#444" stroke-width="1.1"/></svg>
<svg style="left:960px;top:241px" width="13" height="13"><circle cx="6.5" cy="6.5" r="4.6" fill="#fff" stroke="#777" stroke-width="2.2"/><circle cx="6.5" cy="6.5" r="5.8" fill="none" stroke="#aaa" stroke-width="0.6"/></svg>
<div class="a" style="left:973px;top:244px;width:6px;height:6px;background:#5070d0;border:1px solid #2a3a80"></div>
<svg style="left:962px;top:258px" width="9" height="9"><circle cx="4.5" cy="4.5" r="3.2" fill="#fff" stroke="#444" stroke-width="1.1"/></svg>
<svg style="left:878px;top:227px" width="7" height="10"><path d="M0.8 0.8 L5.8 5 L0.8 9.2 Z" fill="#fff" stroke="#999" stroke-width="1"/></svg>
<svg style="left:878px;top:242.5px" width="7" height="10"><path d="M0.8 0.8 L5.8 5 L0.8 9.2 Z" fill="#fff" stroke="#999" stroke-width="1"/></svg>
<svg style="left:878px;top:258px" width="7" height="10"><path d="M0.8 0.8 L5.8 5 L0.8 9.2 Z" fill="#fff" stroke="#999" stroke-width="1"/></svg>

<div class="a" style="left:995px;top:0;width:5px;height:383px;background:linear-gradient(90deg,#8a8a8a 0,#8a8a8a 1px,#e4e8ec 1px,#e4e8ec 2.5px,#aab4c0 2.5px)"></div>
<!-- ============ status bar ============ -->
<div class="a" style="left:815px;top:40px;width:11px;height:343px;background:#f0f0f0;border-left:1px solid #f8f8f8"></div>
<svg style="left:817px;top:45px" width="7" height="5"><path d="M0.5 4.3 L3.5 1 L6.5 4.3" fill="none" stroke="#444" stroke-width="1.4"/></svg>
<div class="a" style="left:815px;top:257px;width:10px;height:13px;background:#c9c9c9"></div>
<div class="a" style="left:48px;top:486px;width:767px;height:14px;background:#efefef"></div>
<div class="a" style="left:48px;top:487px;width:46px;height:13px;background:#fff;border:1px solid #d0d0d0;border-top-color:#aaa"></div>
<div class="t" style="left:51px;top:490px;font-size:9px;color:#222">64%</div>
<svg style="left:85px;top:492px" width="7" height="5"><path d="M0.5 0.5 L3.5 3.8 L6.5 0.5" fill="none" stroke="#555" stroke-width="1.2"/></svg>
<svg style="left:97px;top:489px" width="22" height="9"><path d="M0.8 1 v7" stroke="#aaa" stroke-width="1.2"/><path d="M6 1 L2.2 4.5 L6 8 Z" fill="#aaa"/><path d="M18 1.5 L15 4.5 L18 7.5 Z" fill="#aaa"/></svg>
<div class="a" style="left:120px;top:487px;width:34px;height:13px;background:#fff;border:1px solid #d0d0d0;border-top-color:#aaa"></div>
<div class="t" style="left:123px;top:490px;font-size:9px;color:#222">1</div>
<svg style="left:145px;top:492px" width="7" height="5"><path d="M0.5 0.5 L3.5 3.8 L6.5 0.5" fill="none" stroke="#555" stroke-width="1.2"/></svg>
<svg style="left:159px;top:489px" width="20" height="9"><path d="M2 1.5 L5 4.5 L2 7.5 Z" fill="#aaa"/><path d="M12.5 1 L16.3 4.5 L12.5 8 Z" fill="#aaa"/><path d="M17.5 1 v7" stroke="#aaa" stroke-width="1.2"/></svg>
<div class="a" style="left:181px;top:487px;width:140px;height:13px;background:linear-gradient(#dedede,#d2d2d2);border-left:1px solid #c0c0c0;border-right:1px solid #c8c8c8"></div>
<div class="t" style="left:211px;top:489.5px;font-size:10px;letter-spacing:-0.3px;color:#1a1a1a;-webkit-text-stroke:0.25px #222">22 次还原；无重做</div>
<svg style="left:311px;top:489px" width="6" height="9"><path d="M0.5 0.5 L5 4.5 L0.5 8.5 Z" fill="#111"/></svg>
<svg style="left:325px;top:490px" width="5" height="7"><path d="M4 0.5 L1 3.5 L4 6.5" fill="none" stroke="#333" stroke-width="1.3"/></svg>
<div class="a" style="left:561px;top:488px;width:14px;height:11px;background:#cacaca"></div>
<svg style="left:806px;top:490px" width="5" height="7"><path d="M1 0.5 L4 3.5 L1 6.5" fill="none" stroke="#333" stroke-width="1.3"/></svg>
<div class="a" style="left:815px;top:486px;width:11px;height:14px;background:#fafafa"></div>
<div class="a" style="left:826px;top:485px;width:174px;height:15px;background:#d6d6d6;border-left:2px solid #666;border-top:1px solid #555"></div>
<div class="t" style="left:836px;top:488.5px;font-size:10px;color:#1a1a1a;-webkit-text-stroke:0.25px #222">1 个图层</div>
<!-- taskbar -->
<div class="a" style="left:0;top:500px;width:1000px;height:6px;background:linear-gradient(#e6eaee 0,#e6eaee 3.5px,#d0d8e0 3.5px);border-top:1px solid #707070"></div>
<div class="a" style="left:81px;top:503.5px;width:21px;height:3px;background:#b89a50"></div>
<div class="a" style="left:112px;top:503.5px;width:18px;height:3px;background:#c0a458"></div>
<div class="a" style="left:144.5px;top:503.5px;width:21.5px;height:3px;background:#b49448"></div>
<div class="a" style="left:363.5px;top:503.5px;width:124px;height:3px;background:#3c444c"></div>
<!-- IME -->
<div class="a" style="left:884px;top:486px;width:116px;height:14px;background:#f6f6f6;border-top:1px solid #d8d8d8"></div>
<svg style="left:871px;top:483px" width="24" height="23"><path d="M3.5 4 C3.5 2.5 4.5 1.8 6 1.6 L18 0.8 C19.5 0.7 20.5 1.5 20.7 3 L22.5 18.5 C22.7 20 21.8 21 20.3 21.2 L7 22 C5.5 22.1 4.5 21.3 4.3 19.8 Z" fill="#36a82c"/><path d="M18 6.5 C15 4.5 8.5 4.8 8 8 C7.6 10.8 16.5 10 16.8 13.5 C17 17 10 17.5 6.8 15.5" fill="none" stroke="#f4fff0" stroke-width="3" stroke-linecap="round"/></svg>
<div class="t" style="left:896.5px;top:489px;font-size:12px;font-weight:bold;color:#333">英</div>
<svg style="left:914px;top:487px" width="12" height="12"><path d="M6.5 0.5 C11 2 11.5 8 8 10.5 C5.5 12 2 11.5 0.5 9 C4 9.5 7 8 7.5 5 C7.8 3.5 7.5 2 6.5 0.5 Z" fill="#3a3a48"/></svg>
<svg style="left:933px;top:488px" width="9" height="10"><circle cx="2" cy="3" r="1.3" fill="#333"/><path d="M7 4.5 C7.5 6 7 8 5.5 9.5" fill="none" stroke="#333" stroke-width="1.5"/></svg>
<svg style="left:949px;top:488px" width="14" height="10"><rect x="0.7" y="0.7" width="12.5" height="8.5" rx="1" fill="none" stroke="#3a3a48" stroke-width="1.4"/><path d="M3 3.5 h8 M3 6 h8" stroke="#3a3a48" stroke-width="1" stroke-dasharray="1.2 0.8"/></svg>
<svg style="left:966px;top:487px" width="11" height="13"><circle cx="5.5" cy="3.5" r="2.8" fill="#b8c4c4"/><path d="M0.5 13 C0.5 8 2.5 7 5.5 7 C8.5 7 10.5 8 10.5 13 Z" fill="#b8c4c4"/></svg>
<svg style="left:984px;top:487px" width="12" height="13"><path d="M1 11.5 L6 6.5" stroke="#3a3a48" stroke-width="2.6" stroke-linecap="round"/><path d="M5 6 C4 3 6.5 0.5 10 1 L8 3.5 L9 5 L11.5 3.5 C12 7 9 9 6.5 8 Z" fill="#3a3a48"/></svg>
</body></html>
